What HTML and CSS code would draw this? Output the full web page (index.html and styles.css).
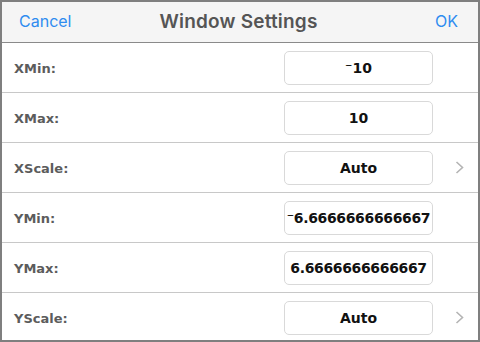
FILE: index.html
```html
<!DOCTYPE html>
<html lang="en">
<head>
    <meta charset="UTF-8">
    <meta name="viewport" content="width=device-width, initial-scale=1.0">
    <title>Window Settings</title>
    <link rel="stylesheet" href="styles.css">
</head>
<body>
    <div class="dialog">
        <div class="header">
            <span class="header-btn">Cancel</span>
            <span class="title">Window Settings</span>
            <span class="header-btn ok">OK</span>
        </div>
        <div class="row">
            <span class="label">XMin:</span>
            <div class="field">⁻10</div>
            <span class="more"></span>
        </div>
        <div class="row">
            <span class="label">XMax:</span>
            <div class="field">10</div>
            <span class="more"></span>
        </div>
        <div class="row">
            <span class="label">XScale:</span>
            <div class="field">Auto</div>
            <span class="more">
                <svg width="9" height="13" viewBox="0 0 9 13"><polyline points="1.5,1 7.5,6.5 1.5,12" fill="none" stroke="#b4b4b4" stroke-width="1.6"/></svg>
            </span>
        </div>
        <div class="row">
            <span class="label">YMin:</span>
            <div class="field long">⁻6.6666666666667</div>
            <span class="more"></span>
        </div>
        <div class="row">
            <span class="label">YMax:</span>
            <div class="field long">6.6666666666667</div>
            <span class="more"></span>
        </div>
        <div class="row">
            <span class="label">YScale:</span>
            <div class="field">Auto</div>
            <span class="more">
                <svg width="9" height="13" viewBox="0 0 9 13"><polyline points="1.5,1 7.5,6.5 1.5,12" fill="none" stroke="#b4b4b4" stroke-width="1.6"/></svg>
            </span>
        </div>
    </div>
</body>
</html>
```

FILE: styles.css
```css
body {
    margin: 0;
    background: white;
}
.dialog {
    width: 480px;
    height: 342px;
    box-sizing: border-box;
    border: 2px solid #7f7f7f;
    overflow: hidden;
    background: white;
}
.header {
    height: 41px;
    display: grid;
    grid-template-columns: 1fr auto 1fr;
    align-items: center;
    padding: 0 20px 2px 17px;
    box-sizing: border-box;
    background: #f5f5f5;
    border-bottom: 1px solid #8a8a8a;
    font-family: Inter, "Liberation Sans", sans-serif;
}
.header-btn {
    color: #2f8cf0;
    font-size: 16px;
}
.header-btn.ok {
    text-align: right;
}
.title {
    color: #555;
    font-size: 19px;
    font-weight: 600;
    letter-spacing: 0.2px;
}
.row {
    height: 49px;
    display: flex;
    align-items: center;
    border-bottom: 1px solid #c8c8c8;
    padding-left: 12px;
    font-family: "DejaVu Sans", sans-serif;
    font-weight: bold;
}
.label {
    flex: 1;
    font-size: 13px;
    color: #5c5c5c;
    padding-top: 2px;
}
.field {
    width: 149px;
    height: 34px;
    box-sizing: border-box;
    border: 1px solid #d9d9d9;
    border-radius: 5px;
    display: flex;
    align-items: center;
    justify-content: center;
    font-size: 14px;
    color: #111;
    white-space: nowrap;
    overflow: hidden;
}
.field.long {
    letter-spacing: -0.35px;
}
.more {
    width: 45px;
    box-sizing: border-box;
    padding-left: 22px;
    display: flex;
    align-items: center;
}
```
